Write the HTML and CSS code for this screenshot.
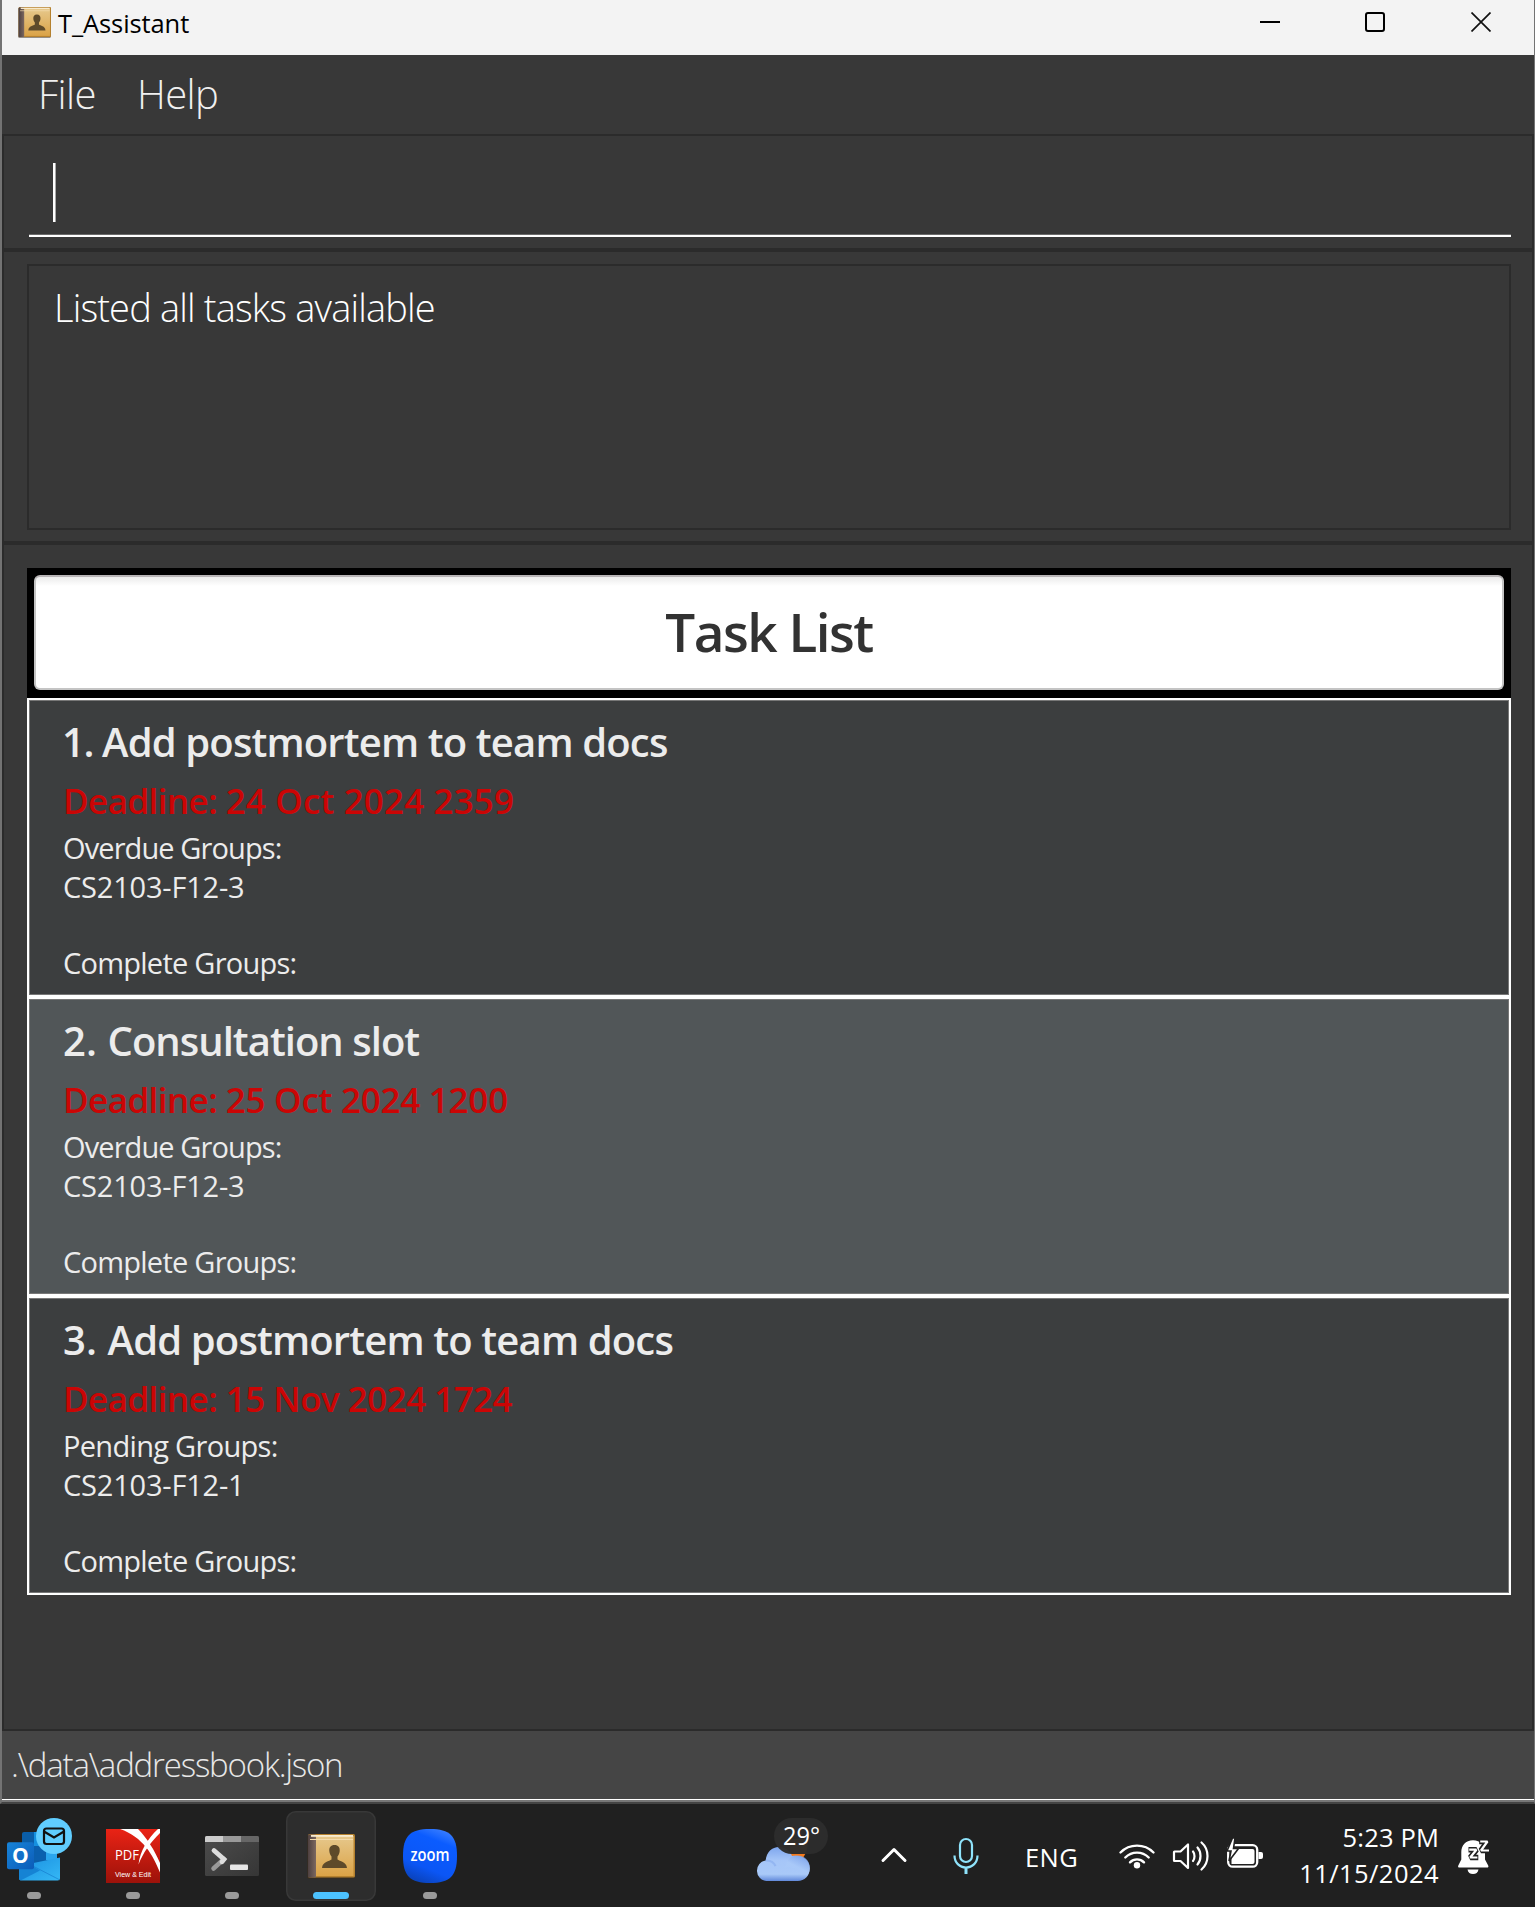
FILE: index.html
```html
<!DOCTYPE html>
<html lang="en">
<head>
<meta charset="utf-8">
<title>T_Assistant</title>
<link rel="stylesheet" href="styles.css">
</head>
<body>
<svg width="0" height="0" class="defs" aria-hidden="true">
  <defs>
    <linearGradient id="cover" x1="0" y1="0" x2="0" y2="1"><stop offset="0" stop-color="#e6c88c"/><stop offset="1" stop-color="#dba347"/></linearGradient>
    <linearGradient id="spine" x1="0" y1="0" x2="1" y2="0"><stop offset="0" stop-color="#4d4040"/><stop offset="1" stop-color="#7c6860"/></linearGradient>
    <symbol id="book" viewBox="0 0 48 45">
      <rect x="0" y="1" width="48" height="44" rx="2" fill="#3a2c1c" opacity=".5"/>
      <rect x="1" y="0" width="47" height="43.500" rx="1.500" fill="#b5812e"/>
      <rect x="8" y="2" width="38.500" height="40" fill="url(#cover)"/>
      <rect x="1" y="0.500" width="8" height="43" rx="1" fill="url(#spine)"/>
      <rect x="4" y="1" width="42" height="1.800" fill="#f8ecd0"/>
      <rect x="3" y="5" width="43" height="1" fill="#f3dcae"/>
      <path d="M27.500 11c3.800 0 5.500 2.500 5.200 6-.2 2.600-1.200 4.300-2.200 5.500v3c2 1.800 9 2 9.500 8.500H15c.5-6.500 7.500-6.700 9.500-8.500v-3c-1-1.200-2-2.900-2.200-5.500-.3-3.500 1.400-6 5.200-6z" fill="#5e4a2a"/>
    </symbol>
  </defs>
</svg>
<div class="window">
  <header class="titlebar">
    <svg class="app-icon" width="33" height="31"><use href="#book" width="33" height="31"/></svg>
    <span class="app-name">T_Assistant</span>
    <div class="controls">
      <svg width="20" height="20"><path d="M0 10h20" stroke="#000" stroke-width="2"/></svg>
      <svg width="20" height="20"><rect x="1" y="1" width="18" height="18" rx="2" fill="none" stroke="#000" stroke-width="2"/></svg>
      <svg width="20" height="20"><path d="M.5.500l19 19M19.500.500l-19 19" stroke="#111" stroke-width="1.700"/></svg>
    </div>
  </header>
  <nav class="menubar"><span class="menu-file">File</span><span class="menu-help">Help</span></nav>
  <section class="pane command-pane"><div class="command"><i class="caret"></i></div></section>
  <section class="pane result-pane"><div class="result"><span>Listed all tasks available</span></div></section>
  <main class="pane list-pane">
    <div class="list-head"><div class="list-title"><span>Task List</span></div></div>
    <article class="card">
      <h2><span class="num one">1. </span><span>Add postmortem to team docs</span></h2>
      <p class="deadline"><span class="label">Deadline: </span><span class="d1">24 Oct 2024 2359</span></p>
      <p class="line"><span class="overdue">Overdue Groups:</span></p>
      <p class="line groups"><span>CS2103-F12-3</span></p>
      <p class="line"><span class="complete">Complete Groups:</span></p>
    </article>
    <article class="card alt">
      <h2><span class="num">2. </span><span class="t2">Consultation slot</span></h2>
      <p class="deadline"><span class="label">Deadline: </span><span class="d2">25 Oct 2024 1200</span></p>
      <p class="line"><span class="overdue">Overdue Groups:</span></p>
      <p class="line groups"><span>CS2103-F12-3</span></p>
      <p class="line"><span class="complete">Complete Groups:</span></p>
    </article>
    <article class="card">
      <h2><span class="num">3. </span><span>Add postmortem to team docs</span></h2>
      <p class="deadline"><span class="label">Deadline: </span><span class="d3">15 Nov 2024 1724</span></p>
      <p class="line"><span class="pending">Pending Groups:</span></p>
      <p class="line groups"><span>CS2103-F12-1</span></p>
      <p class="line"><span class="complete">Complete Groups:</span></p>
    </article>
  </main>
  <footer class="status"><span>.\data\addressbook.json</span></footer>
</div>
<div class="taskbar">
  <div class="apps">
    <svg width="90" height="90">
      <defs>
        <linearGradient id="ob" x1="0" y1="0" x2="1" y2="1"><stop offset="0" stop-color="#1784d9"/><stop offset="1" stop-color="#0c5cb8"/></linearGradient>
        <linearGradient id="oe" x1="0" y1="0" x2="1" y2="1"><stop offset="0" stop-color="#1a8fe0"/><stop offset="1" stop-color="#35b8f5"/></linearGradient>
      </defs>
      <rect x="33" y="21" width="35" height="36" rx="2" fill="#0a5ea8"/>
      <path d="M45 21h12v14H45z" fill="#1590df"/><path d="M45 35h12v14H45z" fill="#0a5fae"/><path d="M57 35h11v14H57z" fill="#2aa5ee"/>
      <path d="M30 55l41-8.500V67a2.500 2.500 0 0 1-2.500 2.500h-36A2.500 2.500 0 0 1 30 67z" fill="url(#oe)"/>
      <path d="M30 48l21 11.500L31.500 69.500A3 3 0 0 1 30 67z" fill="#1583d4"/>
      <path d="M40 53l31 16" stroke="#1478cc" stroke-width="1" opacity=".6"/>
      <rect x="18" y="31.300" width="27" height="27" rx="2" fill="url(#ob)"/>
      <text x="31.300" y="52" text-anchor="middle" class="outlook-o">O</text>
      <circle cx="65" cy="25" r="18" fill="#60cdff"/>
      <rect x="55" y="17.500" width="20" height="15.500" rx="2.500" fill="none" stroke="#111" stroke-width="2.200"/>
      <path d="M55 20.500l10 6 10-6" fill="none" stroke="#111" stroke-width="2.200"/>
      <rect x="38" y="81" width="14" height="7" rx="3.500" fill="#9a9a9a"/>
    </svg>
    <svg width="90" height="90">
      <defs><linearGradient id="pdf" x1="0" y1="0" x2="0" y2="1"><stop offset="0" stop-color="#ea2315"/><stop offset="1" stop-color="#9c120a"/></linearGradient></defs>
      <rect x="18" y="18" width="54" height="54" fill="url(#pdf)"/>
      <path d="M32 18h18c9 9 17 22 22 34v9.500C65 44 55 26 32 18z" fill="#fff"/>
      <path d="M72 18v4C62 32 55 42 50.500 53.500 52 40 60 27 70 18z" fill="#fff"/>
      <text x="27" y="49" class="pdf-name" textLength="24" lengthAdjust="spacingAndGlyphs">PDF</text>
      <text x="27" y="65.800" class="pdf-sub" textLength="36" lengthAdjust="spacingAndGlyphs">View &amp; Edit</text>
      <rect x="38" y="81" width="14" height="7" rx="3.500" fill="#9a9a9a"/>
    </svg>
    <svg width="90" height="90">
      <defs>
        <linearGradient id="term" x1="0" y1="0" x2="1" y2="1"><stop offset="0" stop-color="#4c4c4c"/><stop offset="1" stop-color="#363636"/></linearGradient>
      </defs>
      <rect x="18" y="25" width="54" height="40" rx="1.500" fill="url(#term)"/>
      <path d="M18 31v-4.500q0-1.500 1.500-1.500H36v6z" fill="#ccc"/><path d="M36 25h18v6H36z" fill="#999"/><path d="M54 25h16.500q1.500 0 1.500 1.500V31H54z" fill="#666"/>
      <path d="M26.500 57.500L37 48" stroke="#999" stroke-width="4.500" stroke-linecap="round"/>
      <path d="M27 39.500l10 8.800-2 2.500" fill="none" stroke="#ddd" stroke-width="4.800" stroke-linecap="round"/>
      <rect x="43" y="53.500" width="18" height="5.500" rx="1" fill="#e6e6e6"/>
      <rect x="38" y="81" width="14" height="7" rx="3.500" fill="#9a9a9a"/>
    </svg>
    <svg width="90" height="90">
      <rect x=".75" y=".75" width="88.500" height="88.500" rx="9" fill="#2d2d2d" stroke="#383838" stroke-width="1.500"/>
      <use href="#book" x="21" y="23" width="48" height="45"/>
      <rect x="27" y="81" width="36" height="7" rx="3.500" fill="#4cc2ff"/>
    </svg>
    <svg width="90" height="90">
      <defs><linearGradient id="zm" x1=".8" y1="0" x2=".4" y2="1"><stop offset="0" stop-color="#3f82ff"/><stop offset=".25" stop-color="#0b5cff"/><stop offset=".75" stop-color="#0b56f5"/><stop offset="1" stop-color="#0a44c0"/></linearGradient></defs>
      <path d="M45 18c20 0 27 7 27 27s-7 27-27 27-27-7-27-27 7-27 27-27z" fill="url(#zm)"/>
      <text x="25.500" y="49.500" class="zoom-name" textLength="39" lengthAdjust="spacingAndGlyphs">zoom</text>
      <rect x="38" y="81" width="14" height="7" rx="3.500" fill="#9a9a9a"/>
    </svg>
  </div>
  <svg class="weather" width="90" height="90">
    <defs>
      <linearGradient id="cl" x1="0" y1="0" x2="0" y2="1"><stop offset="0" stop-color="#7ea6ee"/><stop offset=".4" stop-color="#a6c6f8"/><stop offset=".8" stop-color="#a9c9f8"/><stop offset="1" stop-color="#6189da"/></linearGradient>
      <linearGradient id="cr" x1=".9" y1="0" x2=".3" y2="1"><stop offset="0" stop-color="#6f97e6"/><stop offset=".6" stop-color="#a9c9f8"/></linearGradient>
    </defs>
    <path d="M40 28h18q0 12-5 19H40z" fill="#f57a1c"/>
    <path d="M16.200 70a10.400 10.400 0 0 1-.5-20.600C16.500 41 22 36 29 36c6.500 0 11 3.500 13 9 8.500-1.500 17.800 3 17.800 12.500 0 7.500-5.500 12.500-12 12.500z" fill="url(#cl)"/>
    <path d="M35.500 56c1-8 6-11.500 12-11.500 7 0 12.300 5 12.300 12 0 3-1 6-3 8-6-6-14-9-21.300-8.500z" fill="url(#cr)" opacity=".75"/>
    <path d="M15.500 49.500c5-.3 8.500 2.200 10 5.500" stroke="#7fa5ec" stroke-width="2" fill="none" opacity=".5"/>
    <rect x="24" y="7" width="54" height="36" rx="18" fill="#2c2c2c" opacity=".97"/>
    <text x="33" y="33.500" class="temp" textLength="37" lengthAdjust="spacingAndGlyphs">29°</text>
  </svg>
  <svg class="tray" width="36" height="90"><path d="M7 49.500l11-11 11 11" fill="none" stroke="#fff" stroke-width="3" stroke-linecap="round" stroke-linejoin="round"/></svg>
  <svg class="tray" width="36" height="90"><g fill="none" stroke="#8fe3fb" stroke-width="2.200"><rect x="12" y="28" width="12" height="23" rx="6"/><path d="M6.500 44.500c0 7 5 12 11.500 12s11.500-5 11.500-12" /><path d="M18 56.500v6.500" stroke-width="3"/></g></svg>
  <span class="lang">ENG</span>
  <svg class="wifi" width="42" height="90"><g fill="none" stroke="#fff" stroke-width="2.400" stroke-linecap="round"><path d="M4.500 41.500a23.300 23.300 0 0 1 33 0"/><path d="M9.300 46.500a16.500 16.500 0 0 1 23.400 0"/><path d="M14 51.300a9.900 9.900 0 0 1 14 0"/></g><circle cx="21" cy="54.200" r="3.200" fill="#fff"/></svg>
  <svg class="tray-icon" width="42" height="90"><g fill="none" stroke="#fff" stroke-width="2.200" stroke-linecap="round" stroke-linejoin="round"><path d="M4.500 40.500h6l7.500-7v23.500l-7.500-7h-6q-.5 0-.5-.5v-8.500q0-.5.500-.5z"/><path d="M23 40.500c2 2.500 2 7 0 9.500"/><path d="M27.500 36.500c4 4.500 4 12.500 0 17"/><path d="M31.500 31.500c8 7 8 20 0 27"/></g></svg>
  <svg class="tray-icon" width="42" height="90"><rect x="4.200" y="34.200" width="29" height="21.500" rx="4.500" fill="none" stroke="#fff" stroke-width="2.300"/><path d="M7.500 53v-9l4-6h17q2 0 2 2v11q0 2-2 2z" fill="#fff"/><path d="M34.500 41h2.500q2 0 2 2v3q0 2-2 2h-2.500z" fill="#fff"/><path d="M8.500 27l-5.500 13h4l-2 10 9.500-12.500h-5l1.500-10.500z" fill="#fff" stroke="#202020" stroke-width="1.600"/></svg>
  <div class="clock"><span class="time">5:23 PM</span><span class="date">11/15/2024</span></div>
  <svg class="bell" width="42" height="90"><path d="M21 29.300c-7.500 0-11.700 5.500-11.700 11.700v7.500l-3 6q-.8 2 1.200 2h27.500q2 0 1.200-2l-3.200-6v-7.500c0-6.200-4.500-11.700-12-11.700z" fill="#fff"/><path d="M15.500 58.500h11c-.5 3-2.500 4.500-5.500 4.500s-5-1.500-5.500-4.500z" fill="#fff"/><g fill="none" stroke="#202020" stroke-width="5.600" stroke-linejoin="bevel"><path d="M16.500 38.700h8l-6.200 7.800h8"/><path d="M27.200 30.500h8.300l-6.500 9h8.500"/></g><g fill="none" stroke="#fff" stroke-width="2.200" stroke-linejoin="bevel"><path d="M17.200 38.700h7.200l-6.200 7.800h7.200"/><path d="M28.200 30.500h7.300l-6.500 9h8"/></g></svg>
</div>
</body>
</html>
```
FILE: styles.css
```css
* { box-sizing: border-box; }

body {
  margin: 0;
  width: 1535px;
  height: 1907px;
  overflow: hidden;
  background: #202020;
  font-family: "Open Sans", "Noto Sans", sans-serif;
}

.defs { position: absolute; }
svg { display: block; flex: none; }
h2, p { margin: 0; }
span { white-space: pre; }

.window {
  display: flex;
  flex-direction: column;
  height: 1804px;
  border-left: 2px solid #737373;
  border-right: 1px solid #737373;
  border-bottom: 2px solid #444;
  background: #383838;
}

.titlebar {
  display: flex;
  height: 55px;
  padding: 7px 43px 0 16px;
  background: #f3f3f3;
}

.app-name {
  margin-left: 7px;
  font-size: 25.5px;
  line-height: 32px;
  letter-spacing: -0.1px;
  color: #000;
}

.controls {
  display: flex;
  gap: 86px;
  margin: 5px 0 0 auto;
}
.controls svg:first-child { margin-right: -1px; }

.menubar {
  display: flex;
  height: 79px;
  padding: 14px 0 0 36px;
  font-size: 40px;
  font-weight: 300;
  line-height: 50px;
  letter-spacing: -0.6px;
  color: #f0f0f0;
}

.menu-file { width: 99px; }

.pane { border: 2px solid #2b2b2b; }

.command-pane { height: 116px; padding: 0 21px 0 25px; }
.command {
  height: 101px;
  padding: 27px 0 0 24px;
  border-bottom: 2px solid #fff;
  box-shadow: inset 0 -1px #6b6b6b;
}
.caret { display: block; width: 3px; height: 59px; border-right: 1px solid #aaa; background: #fff; }

.result-pane { height: 293px; padding: 12px 21px 0 23px; }
.result {
  height: 266px;
  padding: 16px 0 0 25px;
  border: 2px solid #2b2b2b;
  font-size: 38px;
  font-weight: 300;
  line-height: 50px;
  letter-spacing: -0.84px;
  color: #fff;
}

.list-pane { height: 1188px; padding: 23px 21px 0 23px; }
.list-head { height: 130px; padding: 7px 7px 8px; background: #000; }
.list-title {
  height: 115px;
  border: 2px solid #c4c4c4;
  border-top-color: #b8b4b6;
  border-radius: 6px;
  background: linear-gradient(#ebebeb, #fff 9px);
  font-size: 53px;
  font-weight: 600;
  line-height: 110px;
  letter-spacing: -1.5px;
  text-align: center;
  color: #323232;
}

.card {
  height: 299px;
  padding: 16px 0 0 34px;
  border: 2px solid #fff;
  box-shadow: inset 0 0 0 1px #777;
  background: #3c3e3f;
  color: #ececec;
}
.card.alt { background: #515658; }
.card h2 { font-size: 40px; font-weight: 600; line-height: 52px; letter-spacing: -0.85px; }
.card .num { letter-spacing: 0.1px; }
.card .num.one { margin-left: -1px; letter-spacing: -1.4px; }
.card .t2 { letter-spacing: -0.98px; }
.deadline {
  margin-top: 11px;
  font-size: 35px;
  font-weight: 600;
  line-height: 44px;
  color: #cb0505;
}
.label { letter-spacing: -0.58px; }
.d1 { letter-spacing: 0.14px; }
.d2 { letter-spacing: -0.25px; }
.d3 { letter-spacing: -0.53px; }
.line { font-size: 29px; line-height: 38px; letter-spacing: -0.2px; }
.overdue { letter-spacing: -0.9px; }
.complete { letter-spacing: -0.75px; }
.pending { letter-spacing: -0.69px; }
.deadline + .line { margin: 6px 0 1px; }
.groups { margin-bottom: 38px; }

.status {
  height: 71px;
  padding: 12px 0 0 9px;
  border-bottom: 2px solid #777;
  box-shadow: inset 0 -1px #fff;
  background: #454545;
  font-size: 33px;
  font-weight: 300;
  line-height: 44px;
  letter-spacing: -1.17px;
  color: #e8e8e8;
}

.taskbar {
  display: flex;
  height: 103px;
  padding-top: 7px;
  background: #202020;
  color: #fff;
}
.apps { display: flex; gap: 9px; margin-left: -11px; }
.outlook-o { font-size: 21px; font-weight: 700; fill: #fff; }
.pdf-name { font-size: 14px; fill: #fff; }
.pdf-sub { font-family: "Liberation Sans", sans-serif; font-size: 7px; fill: #fff; }
.zoom-name { font-size: 17.5px; font-weight: 600; fill: #fff; }
.temp { font-size: 25px; fill: #fff; }

.weather { margin-left: 275px; }
.tray { margin-left: 36px; }
.lang {
  width: 60px;
  margin-left: 41px;
  padding-top: 29px;
  font-size: 25.5px;
  line-height: 34px;
  letter-spacing: 0.4px;
}
.wifi { margin-left: 31px; }
.tray-icon { margin-left: 12px; }
.clock {
  display: flex;
  flex-direction: column;
  align-items: flex-end;
  width: 173px;
  padding-top: 8px;
  font-size: 25.5px;
  line-height: 36px;
}
.time { letter-spacing: 0.15px; }
.date { letter-spacing: 0.45px; }
.bell { margin-left: 13px; }
```
